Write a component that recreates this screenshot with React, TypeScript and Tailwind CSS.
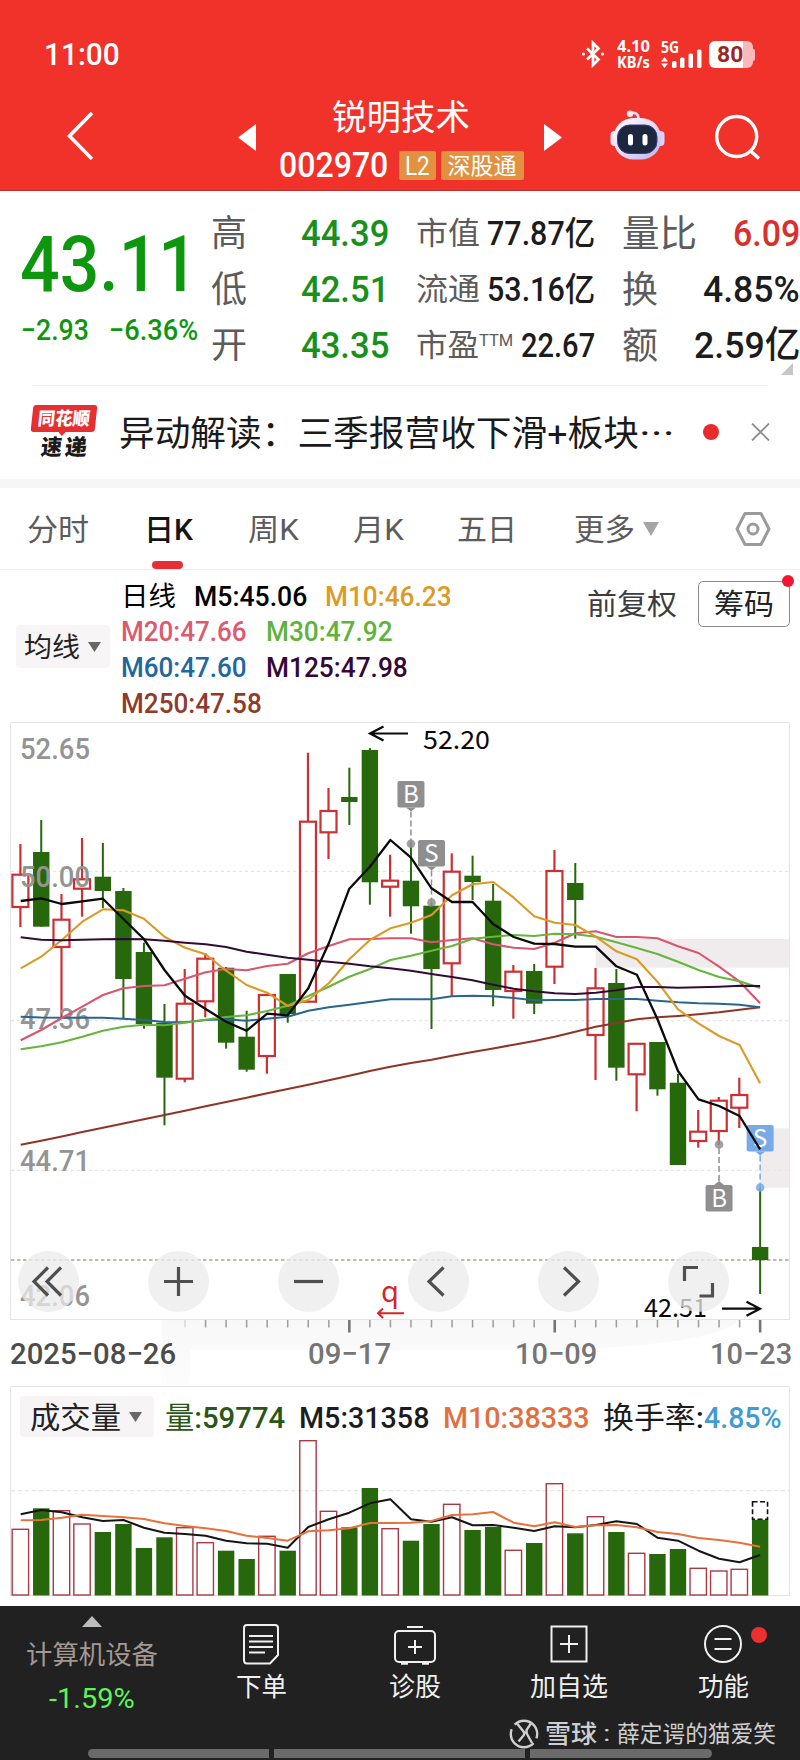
import { useLayoutEffect, useRef } from "react";
import type { ReactNode } from "react";

type Candle = {
  up: boolean;
  high: number;
  top: number;
  bottom: number;
  low: number;
  vol: number;
};

const STEP = 20.54;
const px = (i: number) => 20.7 + i * STEP;

const c = (
  kind: "r" | "g",
  high: number,
  top: number,
  bottom: number,
  low: number,
  vol: number,
): Candle => ({ up: kind === "r", high, top, bottom, low, vol });

const CANDLES: Candle[] = [
  c("r", 844, 874.7, 907, 927, 1529.3),
  c("g", 820, 852, 926.7, 926.7, 1508.3),
  c("r", 894, 919.7, 947, 1018, 1510.7),
  c("r", 838, 879.3, 888.7, 916.7, 1524),
  c("g", 843, 876.7, 891, 908, 1532),
  c("g", 888, 891, 979, 1018, 1524),
  c("g", 942.7, 952, 1024, 1028.7, 1548),
  c("g", 1004, 1022.7, 1077.7, 1125.3, 1537.3),
  c("r", 969, 1003.7, 1078.7, 1082.3, 1527.7),
  c("r", 953, 958.7, 1001.3, 1017.3, 1542.7),
  c("g", 967, 967.7, 1042.7, 1048.7, 1550.7),
  c("g", 1010.7, 1036.7, 1069.7, 1071.7, 1559),
  c("r", 995, 995, 1056, 1073.7, 1536.3),
  c("g", 974, 974, 1014, 1022.7, 1550.7),
  c("r", 752.7, 821.7, 1001.7, 1001.7, 1440.7),
  c("r", 788, 811, 832.3, 859, 1511.3),
  c("g", 767.7, 797, 802, 825, 1527.3),
  c("g", 748, 750, 882.3, 904.7, 1488),
  c("r", 854.7, 880.7, 886.7, 916.7, 1528.7),
  c("g", 842, 880.7, 906.3, 933.7, 1540.7),
  c("g", 903, 905.7, 969, 1029, 1524),
  c("r", 853.3, 871.7, 963.3, 996, 1504.3),
  c("g", 855.7, 875.7, 882, 900, 1530),
  c("g", 884, 900.7, 990, 1006.3, 1527),
  c("r", 965, 971.7, 991, 1018.7, 1550.3),
  c("g", 964, 971, 1003.7, 1014, 1543),
  c("r", 850, 871, 966.7, 984, 1483.7),
  c("g", 863, 883, 900, 938.7, 1533.3),
  c("r", 968, 988.3, 1035, 1080, 1516.7),
  c("g", 969, 983, 1067.7, 1080.7, 1532),
  c("r", 1043.3, 1043.8, 1074.3, 1111.3, 1553.3),
  c("g", 1042, 1042, 1089.3, 1095.7, 1554),
  c("g", 1074, 1082.7, 1165, 1165, 1549),
  c("r", 1110, 1131.7, 1141, 1147.7, 1568.3),
  c("r", 1097, 1100.7, 1131, 1145, 1571),
  c("r", 1077.7, 1095, 1107.7, 1128, 1569.3),
  c("g", 1188, 1247, 1260, 1294, 1519.7),
];

const M5 = [
  901, 898.3, 904, 901.3, 898.7, 919, 939, 970, 995.7, 1009, 1021.7, 1030.7, 1013.7, 1015.3, 988.3,
  943.3, 888.7, 866.7, 840, 857.7, 888.3, 902, 902, 924, 937, 943.7, 944, 946.7, 946.7, 966.3, 974.7,
  1019, 1071, 1099.3, 1106, 1116, 1149.3,
];
const M10 = [
  968.3, 956.7, 940, 921.7, 909.3, 910.3, 918.7, 936.7, 947.7, 954.3, 970.7, 985, 992.7, 1006, 1000,
  983.3, 959.3, 940, 928.3, 922.7, 915, 895.3, 884.3, 882, 897.7, 916.3, 922.7, 925, 936.7, 951.3,
  959.3, 981.7, 1009.3, 1023.3, 1036, 1045, 1083.3,
];
const M20 = [
  1040.3, 1030, 1018, 1006.7, 995, 988.3, 986, 985.3, 978.7, 972.3, 969, 970.3, 966, 963.7, 953.3,
  946, 939.3, 939, 938.3, 938.3, 942.3, 940, 938.3, 944.3, 947.7, 949, 942.7, 933.3, 931.3, 937, 937,
  938.3, 946.3, 953, 966.7, 981.7, 1003.3,
];
const M30 = [
  1049.3, 1046.3, 1042.3, 1036.7, 1030.7, 1026.7, 1024.7, 1025.3, 1022.7, 1019.7, 1017, 1015.3, 1011,
  1005.7, 996, 986.7, 976.7, 969, 960, 955.7, 950.7, 946, 938.7, 936.7, 935, 936, 933.7, 934.3, 936.7,
  942.3, 948, 954, 961.7, 970, 977, 981.3, 988,
];
const M60 = [
  1016.7, 1017.5, 1017.7, 1017.7, 1017.7, 1018.7, 1020, 1022, 1022.3, 1020, 1019.3, 1020.7, 1018.7,
  1016.7, 1010.7, 1007.3, 1004.7, 1002, 999.3, 999.3, 999.3, 996.3, 995.7, 996.3, 998, 1000.3, 1000,
  1000, 999, 999, 999, 1000.7, 1002.3, 1003.3, 1003.7, 1004.7, 1007.3,
];
const M125 = [
  937.3, 939.7, 940.3, 939.7, 939.3, 939, 939.3, 940.7, 942.7, 944.3, 947, 951.7, 954.7, 957.7, 959.7,
  961.7, 963.7, 966.3, 968.3, 970.7, 974, 977, 980.3, 984.7, 988.7, 991.3, 993.3, 994, 992.7, 990.3,
  987, 987, 987.7, 987.3, 986.7, 985.7, 986,
];
const M250 = [
  1144.7, 1140.7, 1136.5, 1132, 1127.7, 1123.5, 1119.3, 1115, 1110.7, 1106.3, 1102, 1097.7, 1093.3,
  1089, 1084.7, 1080.2, 1075.7, 1071, 1066.7, 1063, 1059.7, 1055.7, 1052, 1048.5, 1044.7, 1041,
  1036.7, 1031.7, 1026.7, 1023, 1019.3, 1017.3, 1016, 1014.3, 1012.3, 1009.7, 1007.3,
];
const VOL_M5 = [
  1514.3, 1510, 1512.3, 1517.3, 1521, 1520, 1527.7, 1532.7, 1534, 1535.7, 1540.7, 1543.3, 1543.7,
  1547.7, 1527, 1519.3, 1512.7, 1503.3, 1499.3, 1519.3, 1521.7, 1517.3, 1525.3, 1525, 1527.7, 1531,
  1526.3, 1527.3, 1525, 1521.3, 1524, 1537.7, 1540.7, 1550.7, 1558.7, 1562.3, 1555,
];
const VOL_M10 = [
  1520.3, 1520, 1517.7, 1514.7, 1516, 1517.3, 1519, 1523.3, 1526, 1528.3, 1531, 1535.7, 1538, 1540.7,
  1531.3, 1530.3, 1528.3, 1523, 1523, 1522.7, 1521, 1515, 1514.3, 1512, 1522.7, 1526.3, 1522.3, 1527,
  1525.3, 1525, 1527.3, 1532, 1534, 1538, 1540, 1542.7, 1546.7,
];

const points = (ys: number[]) => ys.map((y, i) => `${px(i).toFixed(1)},${y}`).join(" ");

// Squeezes its text horizontally so that it fills the width of the box.
function Fit({ className = "", children }: { className?: string; children: ReactNode }) {
  const box = useRef<HTMLSpanElement>(null);
  const text = useRef<HTMLSpanElement>(null);

  useLayoutEffect(() => {
    if (!box.current || !text.current) return;
    const ratio = box.current.clientWidth / text.current.offsetWidth;
    text.current.style.transform = `scaleX(${ratio})`;
  });

  return (
    <span ref={box} className={`block shrink-0 whitespace-nowrap leading-none ${className}`}>
      <span ref={text} className="inline-block origin-left">
        {children}
      </span>
    </span>
  );
}

function StatusBar() {
  return (
    <div className="flex h-[92px] items-start pl-[44px] pt-[38px] text-white">
      <Fit className="mt-px w-[76px] text-[31px] font-medium">11:00</Fit>
      <svg className="ml-[461px] mt-[2px] h-7 w-6" viewBox="0 0 24 28" fill="none" stroke="white" strokeWidth="2.7">
        <path d="M6 8.5 17.5 19.5 12 25V3L17.5 8.5 6 19.5" />
        <circle cx="2.5" cy="14" r="1.6" fill="white" stroke="none" />
        <circle cx="21.5" cy="14" r="1.6" fill="white" stroke="none" />
      </svg>
      <div className="ml-[12px] mt-px flex flex-col font-['Noto_Sans'] text-[15.5px] font-bold">
        <Fit className="w-[33px]">4.10</Fit>
        <Fit className="w-[33px]">KB/s</Fit>
      </div>
      <svg className="ml-[11px] h-[31px] w-[42px] overflow-visible" viewBox="0 0 42 31" fill="white">
        <text
          x="0"
          y="14.5"
          fontSize="16"
          fontWeight="700"
          fontFamily="Noto Sans"
          textLength="18"
          lengthAdjust="spacingAndGlyphs"
        >
          5G
        </text>
        <path d="M0 23.500 3.500 19 7 23.500ZM0 25.500 3.500 30 7 25.500Z" />
        <rect x="11" y="23" width="4.500" height="7" rx="1.500" />
        <rect x="19" y="19.500" width="4.500" height="10.500" rx="1.500" />
        <rect x="27.500" y="15.500" width="4.500" height="14.500" rx="1.500" />
        <rect x="36" y="11.500" width="4.500" height="18.500" rx="1.500" />
      </svg>
      <div className="ml-[6px] mt-[3px] flex items-center">
        <div className="flex h-[27px] w-[44px] items-center justify-center rounded-[6px] bg-[linear-gradient(90deg,#fff_78%,#fcb9b8_78%)] pr-0.5 text-[#9f2524]">
          <Fit className="w-[26px] text-[22px] font-bold">80</Fit>
        </div>
        <div className="h-3 w-0.5 rounded-r bg-[#fcb9b8]" />
      </div>
    </div>
  );
}

function Robot() {
  return (
    <svg className="h-[54px] w-[56px]" viewBox="609 108 56 54">
      <defs>
        <linearGradient id="shell" x1="0" y1="0" x2="1" y2="1">
          <stop offset="0" stopColor="#ffffff" />
          <stop offset="0.5" stopColor="#e6dcfb" />
          <stop offset="1" stopColor="#b9b4f4" />
        </linearGradient>
      </defs>
      <path d="M630 113.500C635 111.500 638.500 114 638.500 119" fill="none" stroke="#fbdff0" strokeWidth="2.500" />
      <circle cx="630" cy="113.800" r="3.200" fill="#fbe6f3" />
      <rect x="610.500" y="131" width="8" height="15" rx="4" fill="#e9e4fc" />
      <rect x="656" y="131" width="8.500" height="15" rx="4" fill="#d9d3fa" />
      <rect x="613.500" y="118" width="47.500" height="41.500" rx="20" fill="url(#shell)" />
      <rect x="617.500" y="125" width="39.500" height="28.500" rx="12" fill="#1e2740" stroke="#3a3f78" strokeWidth="1" />
      <rect x="628" y="134" width="5" height="11.500" rx="2.500" fill="white" />
      <rect x="642.500" y="134" width="5" height="11.500" rx="2.500" fill="white" />
    </svg>
  );
}

function Header() {
  return (
    <header className="h-[191px] border-b border-[#bd2f2f] bg-[#f1322b]">
      <StatusBar />
      <div className="flex h-[98px] items-start text-white">
        <svg className="ml-[64px] mt-[18px] h-[52px] w-[32px]" viewBox="0 0 32 52" fill="none" stroke="white" strokeWidth="3.600">
          <path d="M28 3 5.500 26 28 49" />
        </svg>
        <svg className="ml-[142px] mt-[32px] h-[27px] w-[18px]" viewBox="0 0 18 27" fill="white">
          <path d="M18 0V27L0 13.500Z" />
        </svg>
        <div className="ml-[22px] flex w-[246px] flex-col items-center pt-[9px]">
          <Fit className="w-[138px] text-[35px]">锐明技术</Fit>
          <div className="mt-[12px] flex items-center">
            <Fit className="mr-[11px] w-[109px] text-[35px] font-medium">002970</Fit>
            <div className="flex h-[29px] w-[37px] items-center justify-center rounded-[2px] bg-[#e1913f]">
              <Fit className="w-[25px] text-[26px]">L2</Fit>
            </div>
            <div className="ml-[5px] flex h-[29px] w-[83px] items-center justify-center rounded-[2px] bg-[#e1913f]">
              <Fit className="mt-[2px] w-[69px] text-[23px]">深股通</Fit>
            </div>
          </div>
        </div>
        <svg className="ml-[20px] mt-[32px] h-[27px] w-[18px]" viewBox="0 0 18 27" fill="white">
          <path d="M0 0V27L18 13.500Z" />
        </svg>
        <div className="ml-[47px] mt-[16px]">
          <Robot />
        </div>
        <svg className="ml-[48px] mt-[21px] h-[50px] w-[50px]" viewBox="713 113 50 50" fill="none" stroke="white" strokeWidth="3.400">
          <circle cx="736.700" cy="136.500" r="20" />
          <path d="M750.500 151 759 158.500" />
        </svg>
      </div>
    </header>
  );
}

function Quote() {
  return (
    <section className="flex h-[194px] pt-[14px]">
      <div className="w-[211px] text-[#0d970f]">
        <Fit className="ml-[20px] mt-[21px] w-[178px] text-[78px] font-medium">43.11</Fit>
        <div className="mt-[12px] flex text-[29px] font-medium">
          <Fit className="ml-[21px] w-[68px]">−2.93</Fit>
          <Fit className="ml-[20px] w-[89px]">−6.36%</Fit>
        </div>
      </div>
      <div className="w-[189px]">
        <StatRow label="高" value="44.39" />
        <StatRow label="低" value="42.51" />
        <StatRow label="开" value="43.35" />
      </div>
      <div className="w-[222px] pl-[16px] text-[33px] font-medium text-[#1c1c1e]">
        <div className="flex h-14 items-center">
          <Fit className="mt-px w-[64px] text-[31px] font-normal text-[#5c5c5c]">市值</Fit>
          <Fit className="ml-[7px] w-[108px]">77.87亿</Fit>
        </div>
        <div className="flex h-14 items-center">
          <Fit className="mt-px w-[64px] text-[31px] font-normal text-[#5c5c5c]">流通</Fit>
          <Fit className="ml-[7px] w-[108px]">53.16亿</Fit>
        </div>
        <div className="flex h-14 items-center">
          <Fit className="mt-px w-[63px] text-[31px] font-normal text-[#5c5c5c]">市盈</Fit>
          <Fit className="mb-[10px] w-[34px] text-[17px] font-normal text-[#5c5c5c]">TTM</Fit>
          <Fit className="ml-[8px] w-[74px]">22.67</Fit>
        </div>
      </div>
      <div className="relative w-[178px] text-[37px] font-medium text-[#1c1c1e]">
        <div className="flex h-14 items-center justify-between">
          <Fit className="mt-[2px] w-[75px] font-normal text-[#5c5c5c]">量比</Fit>
          <Fit className="w-[67px] text-[#d9302f]">6.09</Fit>
        </div>
        <div className="flex h-14 items-center justify-between">
          <Fit className="mt-[2px] w-[36px] font-normal text-[#5c5c5c]">换</Fit>
          <Fit className="w-[97px]">4.85%</Fit>
        </div>
        <div className="flex h-14 items-center justify-between">
          <Fit className="mt-[2px] w-[36px] font-normal text-[#5c5c5c]">额</Fit>
          <Fit className="w-[106px]">2.59亿</Fit>
        </div>
        <svg className="absolute right-[7px] top-[158px] h-3 w-3" viewBox="0 0 12 12" fill="#c6c6c6">
          <path d="M12 0V12H0Z" />
        </svg>
      </div>
    </section>
  );
}

function StatRow({ label, value }: { label: string; value: string }) {
  return (
    <div className="flex h-14 items-center">
      <Fit className="mt-[2px] w-[36px] text-[36px] font-normal text-[#5c5c5c]">{label}</Fit>
      <Fit className="ml-[54px] w-[88px] text-[37px] font-medium text-[#18911a]">{value}</Fit>
    </div>
  );
}

function NewsRow() {
  return (
    <section className="flex h-[93px] items-start text-[#1a1a1a]">
      <div className="ml-[32px] mt-[19px] w-[64px]">
        <div className="relative flex h-[27px] -skew-x-6 items-center justify-center rounded-[3px] bg-[#e52f31]">
          <Fit className="w-[52px] text-[18px] font-black text-white">同花顺</Fit>
          <svg className="absolute -bottom-[4px] left-[27px] h-[5px] w-[9px]" viewBox="0 0 9 5" fill="#e52f31">
            <path d="M0 0H9L4.500 5Z" />
          </svg>
        </div>
        <div className="mt-[5px] flex -skew-x-6 justify-center gap-[3px] text-[22px] font-black">
          <Fit className="w-[21px]">速</Fit>
          <Fit className="w-[22px]">递</Fit>
        </div>
      </div>
      <Fit className="ml-[23px] mt-[31px] w-[520px] text-[35px]">异动解读：三季报营收下滑+板块</Fit>
      <Fit className="mt-[31px] w-[35px] text-[35px]">···</Fit>
      <div className="ml-[29px] mt-[38px] size-4 rounded-full bg-[#e82b2d]" />
      <svg className="ml-[32px] mt-[37px] h-[18px] w-[19px]" viewBox="0 0 19 18" stroke="#8d8d8d" strokeWidth="1.800">
        <path d="M1 0.500 18 17.500M18 0.500 1 17.500" />
      </svg>
    </section>
  );
}

function Tabs() {
  return (
    <nav className="relative flex h-[82px] items-center border-b border-[#eeeeee] text-[30px] text-[#5c5c5c]">
      <Fit className="ml-[27px] mt-[2px] w-[62px]">分时</Fit>
      <Fit className="ml-[55px] mt-[2px] w-[49px] font-medium text-[#151515]">日K</Fit>
      <Fit className="ml-[55px] mt-[2px] w-[51px]">周K</Fit>
      <Fit className="ml-[54px] mt-[2px] w-[51px]">月K</Fit>
      <Fit className="ml-[53px] mt-[2px] w-[60px]">五日</Fit>
      <Fit className="ml-[57px] mt-[2px] w-[61px]">更多</Fit>
      <svg className="ml-[8px] h-[14px] w-[16px]" viewBox="0 0 16 14" fill="#a5a5a5">
        <path d="M0 0H16L8 14Z" />
      </svg>
      <svg className="ml-[75px] h-[36px] w-[38px]" viewBox="0 0 38 36" fill="none" stroke="#9b9b9b" strokeWidth="3">
        <path d="M11 2.500H27L35 18 27 33.500H11L3 18Z" strokeLinejoin="round" />
        <circle cx="19" cy="18" r="5" />
      </svg>
      <div className="absolute bottom-0 left-[152px] h-[8px] w-[31px] rounded-full bg-[#e62e33]" />
    </nav>
  );
}

function Averages() {
  return (
    <section className="relative flex h-[152px] text-[28.5px]">
      <div className="ml-[16px] mt-[55px] flex h-[43px] w-[94px] items-center rounded-[4px] bg-[#f7f5f6] pl-[8px] text-[#222]">
        <Fit className="mt-[3px] w-[56px] text-[27px]">均线</Fit>
        <svg className="ml-[8px] h-[10px] w-[13px]" viewBox="0 0 13 10" fill="#686868">
          <path d="M0 0H13L6.500 10Z" />
        </svg>
      </div>
      <div className="ml-[11px] flex flex-col pt-[9px] font-medium">
        <div className="flex h-[35.7px] items-center">
          <Fit className="mt-[2px] w-[55px] text-[27px] font-normal text-black">日线</Fit>
          <Fit className="ml-[18px] w-[113px] text-black">M5:45.06</Fit>
          <Fit className="ml-[18px] w-[127px] text-[#dd9a24]">M10:46.23</Fit>
        </div>
        <div className="flex h-[35.7px] items-center">
          <Fit className="w-[126px] text-[#dc5a70]">M20:47.66</Fit>
          <Fit className="ml-[19px] w-[127px] text-[#5fb23c]">M30:47.92</Fit>
        </div>
        <div className="flex h-[35.7px] items-center">
          <Fit className="w-[126px] text-[#21679c]">M60:47.60</Fit>
          <Fit className="ml-[19px] w-[142px] text-[#330838]">M125:47.98</Fit>
        </div>
        <div className="flex h-[35.7px] items-center">
          <Fit className="w-[141px] text-[#903a2a]">M250:47.58</Fit>
        </div>
      </div>
      <div className="absolute right-[10px] top-[11px] flex items-center text-[29px] text-[#333]">
        <Fit className="mt-[3px] w-[90px] text-[#3c3c3c]">前复权</Fit>
        <div className="relative ml-[21px] flex h-[46px] w-[92px] items-center justify-center rounded-[5px] border border-[#8c8c8c]">
          <Fit className="mt-[3px] w-[60px] text-[#222]">筹码</Fit>
          <div className="absolute -right-[5px] -top-[7px] size-3 rounded-full bg-[#f5152f]" />
        </div>
      </div>
    </section>
  );
}

function Marker({ i, y, dot, letter, color }: { i: number; y: number; dot: number; letter: string; color: string }) {
  const x = px(i);
  const above = dot > y;
  const edge = above ? y + 26.5 : y;
  const tip = above ? edge + 4 : edge - 4;
  return (
    <g>
      <line x1={x} y1={tip} x2={x} y2={dot} stroke={color} strokeWidth="1.500" strokeDasharray="6 3" />
      <circle cx={x} cy={dot} r="4.300" fill={color} fillOpacity="0.85" />
      <rect x={x - 13.5} y={y} width="27" height="26.500" rx="2" fill={color} />
      <path d={`M${x - 5} ${edge}L${x} ${tip}L${x + 5} ${edge}Z`} fill={color} />
      <text x={x} y={y + 22} textAnchor="middle" fontSize="24" fontFamily="Noto Sans CJK SC" fill="white">
        {letter}
      </text>
    </g>
  );
}

function Ma({ ys, color, width = 2.1 }: { ys: number[]; color: string; width?: number }) {
  return <polyline points={points(ys)} fill="none" stroke={color} strokeWidth={width} strokeLinejoin="round" />;
}

const PRICE_LABELS = [
  { text: "52.65", y: 759 },
  { text: "50.00", y: 887 },
  { text: "47.36", y: 1029 },
  { text: "44.71", y: 1170.7 },
  { text: "42.06", y: 1306 },
];

function PriceChart() {
  return (
    <section className="relative h-[598px]">
      <svg className="block h-[598px] w-[800px]" viewBox="0 722 800 598">
        <rect x="10.500" y="722.500" width="779" height="597" fill="none" stroke="#e4e4e6" />
        <rect x="595.700" y="939" width="193.500" height="28.700" fill="#f0ecee" />
        <rect x="760" y="1128.300" width="29.200" height="59.400" fill="#f0ecee" />
        {[871.3, 1020.7, 1170.3].map((y) => (
          <line key={y} x1="11" x2="789" y1={y} y2={y} stroke="#e6e6e8" strokeWidth="1.200" strokeDasharray="3 3" />
        ))}
        <line x1="11" x2="789" y1="1260" y2="1260" stroke="#a9a995" strokeWidth="1.600" strokeDasharray="3.500 2.500" />

        {CANDLES.map((k, i) =>
          k.up ? (
            <g key={i} stroke="#cc3033" strokeWidth="2.200" fill="none">
              <line x1={px(i) - 0.3} x2={px(i) - 0.3} y1={k.high} y2={k.top} />
              <line x1={px(i) - 0.3} x2={px(i) - 0.3} y1={k.bottom} y2={k.low} />
              <rect x={px(i) - 8.3} y={k.top} width="16" height={k.bottom - k.top} />
            </g>
          ) : (
            <g key={i} fill="#27680c">
              <rect x={px(i) - 1} y={k.high} width="2" height={k.low - k.high} />
              <rect x={px(i) - 8.2} y={k.top} width="16.400" height={k.bottom - k.top} />
            </g>
          ),
        )}

        {PRICE_LABELS.map((l) => (
          <text
            key={l.text}
            x="20"
            y={l.y}
            fontSize="30"
            fontFamily="Roboto"
            fontWeight="500"
            fill="#949494"
            textLength="70"
            lengthAdjust="spacingAndGlyphs"
          >
            {l.text}
          </text>
        ))}

        <Marker i={19} y={781} dot={843.7} letter="B" color="#8f8f8f" />
        <Marker i={20} y={840} dot={902.5} letter="S" color="#8f8f8f" />
        <Marker i={34} y={1185} dot={1144.5} letter="B" color="#8f8f8f" />
        <Marker i={36} y={1125} dot={1187.5} letter="S" color="#78a9e8" />

        <Ma ys={M250} color="#8f3526" />
        <Ma ys={M60} color="#2a6590" />
        <Ma ys={M20} color="#d9566f" />
        <Ma ys={M30} color="#66b53c" />
        <Ma ys={M10} color="#db9a25" />
        <Ma ys={M125} color="#320a37" />
        <Ma ys={M5} color="#0a0a0a" width={2.3} />

        <g fontFamily="Noto Sans CJK SC" fontSize="25.500" fill="#0a0a0a">
          <text x="423" y="749.300" textLength="67" lengthAdjust="spacingAndGlyphs">
            52.20
          </text>
          <text x="644" y="1316.700" textLength="63" lengthAdjust="spacingAndGlyphs">
            42.51
          </text>
        </g>
        <g fill="none" stroke="#0a0a0a" strokeWidth="2.200">
          <path d="M408 733.500H370M383.500 726.500 370 733.500 383.500 740.500" />
          <path d="M722 1308.700H760M746.500 1301.700 760 1308.700 746.500 1315.700" />
        </g>
        <text x="381" y="1301.500" fontSize="29" fontFamily="Noto Sans" fill="#d3262b">
          q
        </text>
        <path d="M404 1313.300H378M383 1308.500 378 1313.300 383 1318" fill="none" stroke="#d3262b" strokeWidth="2" />
      </svg>

      <div className="absolute bottom-[8px] left-[18px] flex gap-[69px]">
        <Round d="M30 16.500 16 30.500 30 44.500M43 16.500 29 30.500 43 44.500" />
        <Round d="M16 30.500H45M30.500 16V45" />
        <Round d="M16 30.500H45" />
        <Round d="M35.500 16.500 21 30.500 35.500 44.500" />
        <Round d="M26 16.500 40.500 30.500 26 44.500" />
        <Round d="M30 16.500H16.500V30M44.500 32V45H31.500" />
      </div>
    </section>
  );
}

function Round({ d }: { d: string }) {
  return (
    <button type="button" className="block size-[61px] rounded-full bg-[#ebebeb]/75">
      <svg className="size-[61px]" viewBox="0 0 61 61" fill="none" stroke="#4f4f4f" strokeWidth="3.200">
        <path d={d} />
      </svg>
    </button>
  );
}

function TimeAxis() {
  return (
    <section className="relative h-[66px] text-[30px] text-[#757575]">
      <svg className="absolute left-0 top-0 h-[66px] w-[800px]" viewBox="0 1320 800 66">
        <defs>
          <linearGradient id="haze" x1="0" y1="0" x2="0" y2="1">
            <stop offset="0" stopColor="#f8f8f8" />
            <stop offset="1" stopColor="#fefdfe" />
          </linearGradient>
        </defs>
        <path d="M162 1320H740C720 1338 660 1346 560 1350H190V1386H162Z" fill="url(#haze)" />
        {Array.from({ length: 29 }, (_, n) => n + 8).map((i) => {
          const major = i === 16 || i === 26 || i === 36;
          return (
            <line
              key={i}
              x1={px(i)}
              x2={px(i)}
              y1="1320"
              y2={major ? 1332.5 : 1327.5}
              stroke={i === 8 ? "#d8d8d8" : major ? "#767676" : "#9d9d9d"}
              strokeWidth={major ? 2.6 : 1.5}
            />
          );
        })}
      </svg>
      <div className="relative flex pl-[10px] pt-[19px] font-medium">
        <Fit className="w-[166px] text-[#4c4c4c]">2025−08−26</Fit>
        <Fit className="ml-[132px] w-[83px]">09−17</Fit>
        <Fit className="ml-[124px] w-[82px]">10−09</Fit>
        <Fit className="ml-[113px] w-[82px]">10−23</Fit>
      </div>
    </section>
  );
}

function Volume() {
  return (
    <section className="h-[220px]">
      <div className="relative mx-[10px] h-[210px] border border-[#e4e4e6]">
        <svg className="absolute -left-[11px] -top-px h-[210px] w-[800px]" viewBox="0 1386 800 210">
          <line x1="11" x2="789" y1="1490.700" y2="1490.700" stroke="#e6e6e8" strokeWidth="1.200" strokeDasharray="4 3" />
          {CANDLES.map((k, i) =>
            k.up ? (
              <rect
                key={i}
                x={px(i) - 8.5}
                y={k.vol}
                width="16.400"
                height={1595 - k.vol}
                fill="none"
                stroke="#a83a44"
                strokeWidth="1.400"
              />
            ) : (
              <rect key={i} x={px(i) - 8.2} y={k.vol} width="16.400" height={1595.5 - k.vol} fill="#27680c" />
            ),
          )}
          <rect
            x={px(36) - 7.6}
            y="1501.800"
            width="15"
            height="17.500"
            fill="white"
            stroke="#111"
            strokeWidth="1.600"
            strokeDasharray="5 2.500"
          />
          <Ma ys={VOL_M5} color="#151515" width={2} />
          <Ma ys={VOL_M10} color="#e8713a" width={2} />
        </svg>
        <div className="relative flex items-center pl-[9px] pt-[9px] text-[30px] font-medium">
          <div className="flex h-[41px] w-[134px] items-center rounded-[4px] bg-[#f7f4f6] pl-[10px] text-[#222]">
            <Fit className="mt-[3px] w-[91px] font-normal">成交量</Fit>
            <svg className="ml-[8px] h-[10px] w-[13px]" viewBox="0 0 13 10" fill="#686868">
              <path d="M0 0H13L6.500 10Z" />
            </svg>
          </div>
          <Fit className="ml-[11px] mt-[2px] w-[120px] text-[#285716]">
            <span className="font-normal">量</span>:59774
          </Fit>
          <Fit className="ml-[14px] mt-[2px] w-[130px] text-[#1c1c1e]">M5:31358</Fit>
          <Fit className="ml-[14px] mt-[2px] w-[147px] text-[#e2703f]">M10:38333</Fit>
          <Fit className="ml-[13px] mt-[3px] w-[101px] text-[#1c1c1e]">
            <span className="font-normal">换手率</span>:
          </Fit>
          <Fit className="mt-[2px] w-[78px] text-[#3f9ad6]">4.85%</Fit>
        </div>
      </div>
    </section>
  );
}

function NavItem({ label, width, children }: { label: string; width: string; children: ReactNode }) {
  return (
    <div className="flex w-[154px] flex-col items-center text-[#f0f0f0]">
      <svg className="h-[42px] w-[46px]" viewBox="0 0 46 42" fill="none" stroke="#f0f0f0" strokeWidth="2">
        {children}
      </svg>
      <Fit className={`mt-[9px] text-[26px] ${width}`}>{label}</Fit>
    </div>
  );
}

function BottomNav() {
  return (
    <footer className="h-[154px] bg-[#212121]">
      <div className="relative flex h-[113px]">
        <div className="flex w-[184px] flex-col items-center pt-[10px]">
          <svg className="h-[11px] w-[20px]" viewBox="0 0 20 11" fill="#bdbdbd">
            <path d="M10 0 20 11H0Z" />
          </svg>
          <Fit className="mt-[15px] w-[132px] text-[26px] text-[#a39892]">计算机设备</Fit>
          <Fit className="mt-[17px] w-[86px] text-[28px] text-[#5cf556]">-1.59%</Fit>
        </div>
        <div className="flex pt-[17px]">
          <NavItem label="下单" width="w-[51px]">
            <path d="M9 2H37Q40 2 40 5V32L32 40.500H9Q6 40.500 6 37V5Q6 2 9 2Z" />
            <path d="M11 13H35M11 18.500H35M11 24H35M11 29.500H27" />
          </NavItem>
          <NavItem label="诊股" width="w-[52px]">
            <rect x="3" y="8" width="40" height="31" rx="4" />
            <path d="M15 4H31M23 17V31M16 24H30" />
            <path d="M9 40.500H16M30 40.500H37" strokeWidth="2.500" />
          </NavItem>
          <NavItem label="加自选" width="w-[78px]">
            <rect x="5.500" y="3.500" width="35" height="35" />
            <path d="M23 12V30M14 21H32" />
          </NavItem>
          <NavItem label="功能" width="w-[51px]">
            <circle cx="23" cy="21" r="18" />
            <path d="M14.500 16H31.500M14.500 26H31.500" />
          </NavItem>
        </div>
        <div className="absolute right-[33px] top-[21px] size-4 rounded-full bg-[#ee2f2f]" />
      </div>
      <div className="flex h-[30px] items-center pl-[509px] text-[#cfcfcf]">
        <svg className="h-[30px] w-[30px]" viewBox="0 0 30 30" fill="none" stroke="#cfcfcf" strokeWidth="2.400">
          <circle cx="15" cy="15" r="13.200" strokeDasharray="36 5.470" strokeDashoffset="-10" />
          <path d="M8 4.500 14.500 12.500Q16 14.500 14.500 16.500L9.500 22.500M22 4.500 18.500 9.500Q16.500 12 18 15L23 24" />
        </svg>
        <Fit className="ml-[6px] w-[52px] text-[25px] font-medium">雪球</Fit>
        <Fit className="ml-[6px] w-[7px] text-[22px]">:</Fit>
        <Fit className="ml-[7px] w-[159px] text-[23px]">薛定谔的猫爱笑</Fit>
      </div>
      <div className="ml-[88px] flex h-[9px] w-[624px] gap-[5px] overflow-hidden rounded-full">
        <div className="w-[181px] bg-[#6a6a6a]" />
        <div className="w-[251px] bg-[#6a6a6a]" />
        <div className="flex-1 bg-[#6a6a6a]" />
      </div>
    </footer>
  );
}

export default function App() {
  return (
    <div className="h-[1760px] w-[800px] overflow-hidden bg-white font-['Roboto','Noto_Sans_CJK_SC',sans-serif]">
      <Header />
      <Quote />
      <div className="mx-8 h-px bg-[#eeeeee]" />
      <NewsRow />
      <div className="h-[9px] bg-[#f6f6f7]" />
      <Tabs />
      <Averages />
      <PriceChart />
      <TimeAxis />
      <Volume />
      <BottomNav />
    </div>
  );
}
